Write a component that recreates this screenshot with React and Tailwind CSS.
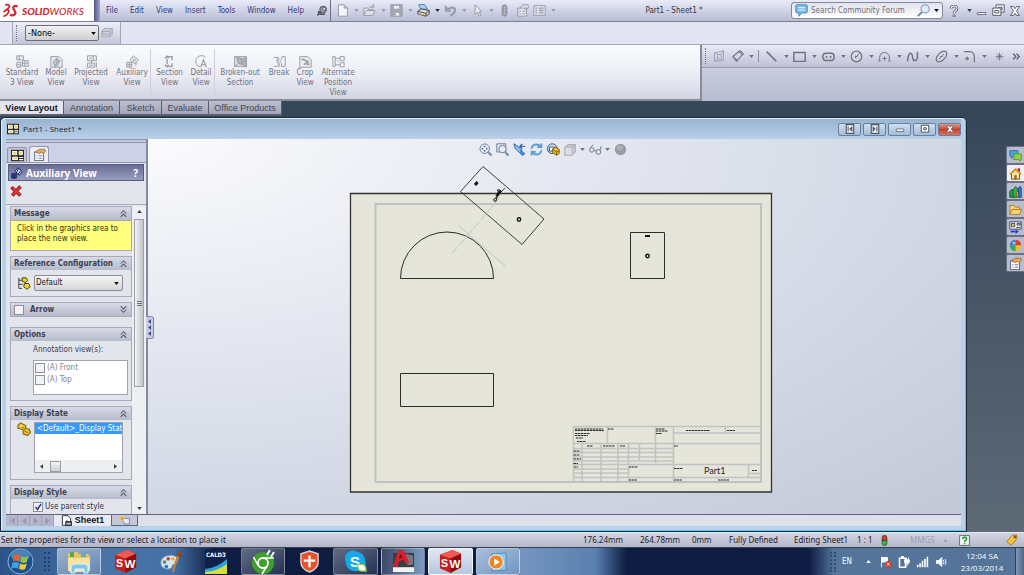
import { useState } from 'react';
import clsx from 'clsx';

const Caret = ({ className = 'text-[#6b7080]' }) => (
    <svg viewBox="0 0 6 4" width="5" height="3" className={className} aria-hidden="true">
        <path d="M0 0h6L3 4z" fill="currentColor" />
    </svg>
);

const Icon = ({ size = 13, className, children }) => (
    <svg
        viewBox="0 0 16 16"
        width={size}
        height={size}
        fill="none"
        stroke="currentColor"
        strokeWidth="1.2"
        className={clsx('shrink-0', className)}
        aria-hidden="true"
    >
        {children}
    </svg>
);

/* ---------- Icon drawings ---------- */

const sheetIcon = (
    <>
        <rect x="0" y="1" width="16" height="14" fill="#2b2b22" stroke="none" />
        <rect x="2" y="3" width="5" height="4" fill="#f5d743" stroke="#fff" />
        <path d="M10 3h4v4h-4z" fill="#f5d743" stroke="#fff" />
        <path d="M2 10h6v3H2z" fill="#f5d743" stroke="#fff" />
        <path d="M10 10.500h5M10 13h5" stroke="#fff" strokeWidth="1.4" />
    </>
);

const handPageIcon = (
    <>
        <rect x="2" y="5" width="11" height="10.5" fill="#fff" stroke="#5c6680" />
        <path d="M4 9.5h1.5M7 9.5h4.5M4 12.5h1.5M7 12.5h4.5" stroke="#5c7bb0" />
        <path d="M3 4.5l5-3h6.5l1 3-3 2.5-2-1.5-3 1.5z" fill="#e0a766" stroke="#8a5a28" strokeWidth="0.8" />
    </>
);

const cubeIcon = (
    <>
        <path d="M1 5l4-3h9v9l-4 4H1z" fill="#c9cbd3" stroke="#a5a7b1" />
        <path d="M1 5h9v10H1z" fill="#dcdee4" stroke="#b0b2bb" />
        <path d="M10 5l4-3" stroke="#a5a7b1" />
    </>
);

const partIcon = (
    <>
        <path d="M1 4l3-3 6 3v3l4 1.5 1.500 3.500-3.500 3.500-5-2V9L1 7z" fill="#f0c52c" stroke="#7d5d0a" />
        <path d="M4 5l5 2.5v3l4 2" stroke="#a47c10" />
        <circle cx="5" cy="4.5" r="1.2" fill="#fff2a0" stroke="none" />
    </>
);

const quickAccess = [
    { name: 'New', art: <path d="M3 1h7l4 4v10H3zM10 1v4h4" fill="#f6f6fa" /> },
    {
        name: 'Open',
        art: (
            <>
                <path d="M1 14V5h5l1 2h5v2M1 14l3-6h11l-3 6z" fill="#dfe1e8" />
                <path d="M8 5c1-3 3-3 5-2M13 0v4h-3" />
            </>
        ),
    },
    {
        name: 'Save',
        art: (
            <>
                <path d="M1 1h14v14H1z" fill="#a5a8b2" />
                <path d="M4 1.5h8v5H4zM4 10h8v5H4z" fill="#eceef3" />
                <path d="M6 11v3" strokeWidth="2" />
            </>
        ),
    },
    {
        name: 'Print',
        active: true,
        art: (
            <>
                <path d="M2 1l7-0.5 4 6H5z" fill="#a9d3f5" stroke="#4d7eaf" />
                <path d="M1 9l4-3 10 2v4l-4 3L1 12z" fill="#e2e2dc" stroke="#45454a" />
                <path d="M1 9l10 2.5L15 8M11 11.5V15" stroke="#45454a" />
                <path d="M3 12l6 1.5" stroke="#d2b43b" strokeWidth="1.5" />
            </>
        ),
    },
    {
        name: 'Undo',
        art: (
            <>
                <path d="M5 7C8 3 14 4 13.5 8.5c-.3 3-3 4.500-6 6" strokeWidth="2.8" />
                <path d="M1 1v8.500h8.500z" fill="currentColor" stroke="none" />
            </>
        ),
    },
    { name: 'Select', art: <path d="M5 1v12l3-3 2 5 2-1-2-4.5h3.5z" fill="#eceef4" /> },
];

const ribbonGroups = [
    [
        {
            label: 'Standard\n3 View',
            width: 'w-11',
            art: <path d="M1 1h8v5H1zM1 9h5v6H1zM8 7h7v7H8zM4 1v5M1 12h5M11 7v7M8 10h7" fill="#eceef2" />,
        },
        {
            label: 'Model\nView',
            width: 'w-6',
            art: (
                <>
                    <path d="M1 2h10l4 4v9H1z" fill="#e8e9ee" />
                    <path d="M4 9l4-5 4 3-3 6-3 1zM8 4l1 5-3 5M9 9l3-2" fill="#c6c8cf" />
                </>
            ),
        },
        {
            label: 'Projected\nView',
            width: 'w-[46px]',
            art: <path d="M3 1h11v6H3zM3 10h9v5H3zM10 1v6M5 4h3M5 12.5h5M8 7v3M14 9v6" fill="#eceef2" />,
        },
        {
            label: 'Auxiliary\nView',
            width: 'w-9',
            art: <path d="M1 9h6v6H1zM9 1l6 5-4 5-6-5zM8 4l4 4M4 9v6M1 12h6M12 5l-4 4M11 13l3-3" fill="#eceef2" />,
        },
    ],
    [
        {
            label: 'Section\nView',
            width: 'w-[37px]',
            art: <path d="M4 2h8M4 14h8M11 2v4M11 10v4M5 5v6M2.5 4L5 1.5 7 4M2.5 12L5 14.5 7 12" strokeWidth="1.8" />,
        },
        {
            label: 'Detail\nView',
            width: 'w-[26px]',
            art: (
                <>
                    <path d="M13 3A7 7 0 1 0 6 14.5" />
                    <path d="M7 15l3.5-9L14 15M8.5 12h4" strokeWidth="1.5" />
                </>
            ),
        },
    ],
    [
        {
            label: 'Broken-out\nSection',
            width: 'w-[50px]',
            art: (
                <>
                    <path d="M0.500 2h15v12h-15z" fill="#dddfe4" />
                    <path d="M4 3v5l3 3 4 1 4 3V3l-4 2-3-1z" fill="#b4b6bd" />
                    <path d="M1 14l5-4M11 6l4 4M2 3l4 3M9 5l1 6" />
                </>
            ),
        },
        { label: 'Break', width: 'w-7', art: <path d="M1 3h4c2 3-2 4 0 6s2 3 0 5H1M6 2c3 4-1 4 1 7s1 3 0 6M11 2h4v12h-5c2-3 0-4-1-6s3-3 2-6z" /> },
        {
            label: 'Crop\nView',
            width: 'w-6',
            art: (
                <>
                    <path d="M1 2h10l4 4v9H1z" fill="#eceef2" />
                    <path d="M3 6c3-2 6 1 9 6M12 7l-6 5M9 12l4-1" strokeWidth="2" />
                </>
            ),
        },
        {
            label: 'Alternate\nPosition\nView',
            width: 'w-[42px]',
            art: <path d="M1 2h3v12H1zM10 2h5v5h-5zM10 9.500h5v5h-5zM4 4h6M4 12h6M6 7l2 1" />,
        },
    ],
];

const sketchTools = [
    { name: 'Line', art: <path d="M2 2l12 12" strokeWidth="1.8" /> },
    { name: 'Rectangle', art: <path d="M1 3h14v11H1z" strokeWidth="1.8" /> },
    {
        name: 'Slot',
        art: (
            <>
                <rect x="1" y="4" width="14" height="9" rx="4" strokeWidth="1.8" />
                <path d="M4.5 8.5h2M9.5 8.5h2" strokeWidth="2.4" />
            </>
        ),
    },
    {
        name: 'Circle',
        art: (
            <>
                <circle cx="8" cy="8" r="6.5" strokeWidth="1.5" />
                <path d="M7 9l5-5M6 8h3M7 7v3" />
            </>
        ),
    },
    { name: 'Arc', art: <path d="M2 13V9a6 6 0 0 1 12 0v4M0.500 13.500h3M12.500 13.500h3M8 8v5M5.5 10.5h5" /> },
    { name: 'Spline', art: <path d="M2 14C2 6 5 2 7 5s0 8 4 8 3-6 3-11" strokeWidth="1.8" /> },
    {
        name: 'Ellipse',
        art: (
            <>
                <ellipse cx="8" cy="8" rx="8" ry="4.5" transform="rotate(-45 8 8)" strokeWidth="1.5" />
                <path d="M5 11l6-6M6.5 8h3" />
            </>
        ),
    },
    { name: 'Fillet', art: <path d="M1 2h7c4 0 6 3 6 6v7M5 8v5M2.5 10.5h5" strokeWidth="1.5" /> },
];

const heads = {
    zoomFit: (
        <>
            <circle cx="7" cy="7" r="5.8" fill="#e6eefb" stroke="#6d7b95" />
            <path d="M7 3l1.500 2h-3zM7 11l1.500-2h-3zM3 7l2-1.500v3zM11 7L9 5.500v3z" fill="#3c4f74" stroke="none" />
            <path d="M11.500 11.500l4 4" stroke="#6c8dbc" strokeWidth="2.6" />
        </>
    ),
    zoomArea: (
        <>
            <path d="M1 1h11v10H1z" stroke="#6d7b95" />
            <circle cx="8" cy="7.500" r="4.5" fill="#e6eefb" stroke="#6d7b95" />
            <path d="M11.500 11.500l4 4" stroke="#6c8dbc" strokeWidth="2.6" />
        </>
    ),
    previous: (
        <>
            <path d="M1 1l5 3 5 5-3 3-5-5z" fill="#8cbcf0" stroke="#2e68b5" />
            <path d="M9 9l5.500 4-2.500 2.500-4-3.500" fill="#4c91de" stroke="#2e68b5" />
            <path d="M15 4H9M11.500 1L8.5 4l3 3" stroke="#2457a5" strokeWidth="1.5" />
        </>
    ),
    rotate: (
        <path d="M2 7c0-5 7-7 11-3M14 0.5V5H9M14 9c0 5-7 7-11 3M2 15.5V11h5" stroke="#5b9be0" strokeWidth="2.2" />
    ),
    section: (
        <>
            <circle cx="6.5" cy="7" r="6" fill="#cde0f5" stroke="#3e5682" />
            <path d="M3 5h6v5H3z" fill="#fff" stroke="#3e5682" />
            <path d="M7 7l3-2 5 3v5l-3 2-5-3z" fill="#f2c325" stroke="#7d5d0a" />
            <path d="M7 8l5 3 3-2M12 11v4" stroke="#7d5d0a" />
        </>
    ),
    glasses: (
        <>
            <circle cx="3.500" cy="8.500" r="2.800" fill="#dbe6f5" stroke="#71798a" />
            <circle cx="11.5" cy="11" r="3" fill="#dbe6f5" stroke="#71798a" />
            <path d="M6.5 9l2.500 1M2 6l3-4M13.500 9L15 4" stroke="#71798a" />
        </>
    ),
    sphere: (
        <>
            <circle cx="8" cy="8" r="7" fill="#9a9ca3" stroke="none" />
            <ellipse cx="7" cy="6" rx="4" ry="3" fill="#adafb6" stroke="none" />
        </>
    ),
};

const hud = [
    ['Zoom to Fit', heads.zoomFit],
    ['Zoom to Area', heads.zoomArea],
    ['Previous View', heads.previous],
    ['Rotate View', heads.rotate],
    ['3D Drawing View', heads.section],
    ['Display Style', cubeIcon, true],
    ['Hide/Show Items', heads.glasses, true],
    ['Edit Appearance', heads.sphere],
];

const taskPane = [
    {
        name: 'Forum',
        art: (
            <>
                <path d="M1 2h10v7H5l-2 3V9H1z" fill="#4aa1e0" stroke="#2b78b5" />
                <path d="M6 6h9v7h-1v2l-2-2H6z" fill="#8fd04a" stroke="#5c9c22" />
            </>
        ),
    },
    {
        name: 'Resources',
        active: true,
        art: (
            <>
                <path d="M11 2h2v5h-2z" fill="#c33" stroke="#811" strokeWidth="0.8" />
                <path d="M3 8v7h10V8L8 3.5z" fill="#f7e7a2" stroke="#7b5411" />
                <path d="M1 9l7-6.5L15 9" stroke="#d49322" strokeWidth="2" />
                <path d="M6.5 10h3v5h-3z" fill="#9a6425" stroke="none" />
            </>
        ),
    },
    {
        name: 'Design Library',
        art: (
            <>
                <path d="M1 8l3-3 2 2v8H1z" fill="#2ba14b" stroke="#0d5a24" />
                <path d="M5 7l3-5 3 3v10H5z" fill="#34b35a" stroke="#0d5a24" />
                <path d="M9 8h2.500v7H9z" fill="#edc52a" stroke="#7d5d0a" />
                <path d="M12 3l2-1 1 2v11h-3z" fill="#3e83d6" stroke="#17427f" />
            </>
        ),
    },
    {
        name: 'File Explorer',
        art: <path d="M1 14V3h5l1.5 2H13v3M1 14l3-6h11.5L13 14z" fill="#f6d678" stroke="#b67b1c" />,
    },
    {
        name: 'View Palette',
        art: (
            <>
                <path d="M1 1h14v9H1z" fill="#f4f1d2" stroke="#3d4f7c" />
                <path d="M3 3h4v4H3zM10 3h4v2h-4zM9 8h5" fill="#eccd3c" stroke="#3d4f7c" />
                <path d="M2 13h6" stroke="#1c3cc9" strokeWidth="2.2" />
                <path d="M8 10v6l4-3z" fill="#1c3cc9" stroke="none" />
            </>
        ),
    },
    {
        name: 'Appearances',
        art: (
            <g stroke="none">
                <path d="M8 8V1a7 7 0 0 1 7 7z" fill="#e03c31" />
                <path d="M8 8h7a7 7 0 0 1-7 7z" fill="#ecc12c" />
                <path d="M8 8v7a7 7 0 0 1-7-7z" fill="#37a84c" />
                <path d="M8 8H1a7 7 0 0 1 7-7z" fill="#3278d4" />
                <circle cx="6" cy="5" r="2" fill="#ffffff" opacity="0.5" />
            </g>
        ),
    },
    { name: 'Custom Properties', art: handPageIcon },
];

const SwCube = () => (
    <svg viewBox="0 0 26 26" width="25" height="25" aria-hidden="true">
        <path d="M2 6l13-5 9 4v14l-11 6-11-5z" fill="#c81d1d" />
        <path d="M2 6l13-5 9 4-11 5z" fill="#ef5a50" />
        <path d="M13 10l11-5v14l-11 6z" fill="#8e0f12" />
        <text x="3" y="19" fontSize="11" fontWeight="700" fill="#fff" fontFamily="Liberation Sans, sans-serif">S</text>
        <text x="12" y="20" fontSize="12" fontWeight="700" fill="#fff" fontFamily="Liberation Sans, sans-serif">W</text>
    </svg>
);

const taskItems = [
    {
        name: 'Windows Explorer',
        state: 'open',
        art: (
            <svg viewBox="0 0 26 26" width="26" height="26" aria-hidden="true">
                <path d="M2 5l4-2h5l2 2h9l2 2v15H2z" fill="#e7c664" />
                <path d="M4 3h4v5H4z" fill="#56a94d" />
                <path d="M15 3h5v5h-5z" fill="#6aa5da" />
                <path d="M2 9h22v12l-2 2H4l-2-2z" fill="#f6e3a0" />
                <path d="M5 24v-7l3-2h11l3 2v7h-4v-4H9v4z" fill="#7ec5ee" stroke="#dff2ff" />
            </svg>
        ),
    },
    { name: 'SolidWorks', art: <SwCube /> },
    {
        name: 'Paint',
        art: (
            <svg viewBox="0 0 26 26" width="24" height="24" aria-hidden="true">
                <path d="M2 14c0-6 7-9 13-8 5 1 7 5 4 8-2 2-5 1-5 4 0 4-12 4-12-4z" fill="#d9e7f4" stroke="#7f9dbb" />
                <circle cx="6" cy="13" r="2" fill="#4a9b3f" />
                <circle cx="10" cy="9.5" r="2" fill="#d94134" />
                <circle cx="15" cy="9.5" r="2" fill="#efb32a" />
                <circle cx="8" cy="18" r="2" fill="#3672c9" />
                <path d="M21 2l3 1-5 11-3 10-2-1 3-10z" fill="#cc8236" />
                <path d="M20 1l5 2-2 5-4-2z" fill="#8a4c1c" />
            </svg>
        ),
    },
    {
        name: 'CALD3',
        art: (
            <svg viewBox="0 0 22 24" width="22" height="24" aria-hidden="true">
                <path d="M0 0h22v24H0z" fill="#14204c" />
                <path d="M0 19Q12 18 22 9v11L0 24z" fill="#2ba6dc" />
                <path d="M0 22Q13 21 22 14v10H0z" fill="#d7de3b" />
                <text x="1" y="7" fontSize="6" fontWeight="700" fill="#fff" fontFamily="DejaVu Sans Condensed, sans-serif">CALD3</text>
            </svg>
        ),
    },
    {
        name: 'Chrome',
        state: 'dim',
        art: (
            <svg viewBox="0 0 26 26" width="26" height="26" fill="none" aria-hidden="true">
                <circle cx="13" cy="14" r="11" fill="#3f9f2d" />
                <path d="M13 9h11M8.5 17L3.5 8M17 17l-5 8" stroke="#fff" strokeWidth="1.5" />
                <circle cx="13" cy="14" r="5" fill="#3f9f2d" stroke="#fff" strokeWidth="1.8" />
                <path d="M17 6l3-5M21 8l3-5" stroke="#fff" strokeWidth="2" />
            </svg>
        ),
    },
    {
        name: 'Security',
        art: (
            <svg viewBox="0 0 22 24" width="21" height="23" aria-hidden="true">
                <path d="M11 1l9 3v9c0 5-4 8-9 10-5-2-9-5-9-10V4z" fill="#e8532b" stroke="#cfd3da" strokeWidth="1.5" />
                <path d="M11 6v12M5 11h12" stroke="#fff" strokeWidth="2.4" />
            </svg>
        ),
    },
    {
        name: 'Skype',
        state: 'dim',
        art: (
            <svg viewBox="0 0 26 26" width="25" height="25" aria-hidden="true">
                <path d="M8 2c3-1 5 0 6 1 6 0 9 5 9 9 2 5-1 11-7 11C7 24 3 19 3 14 1 9 2 4 8 2z" fill="#14a9ea" />
                <text x="7" y="19" fontSize="16" fontWeight="700" fill="#fff" fontFamily="Liberation Sans, sans-serif">S</text>
                <path d="M15 16h5q4 0 4 7h-4q-5 0-5-7z" fill="#fff" stroke="#8cc63f" strokeWidth="1.5" />
            </svg>
        ),
    },
    {
        name: 'AutoCAD',
        state: 'half',
        art: (
            <svg viewBox="0 0 24 26" width="23" height="25" aria-hidden="true">
                <path d="M1 4h22v15H1z" fill="#3e3e42" />
                <path d="M14 5l8 2v9l-6 1z" fill="#77787d" />
                <path d="M1 19h22v5H1z" fill="#f2f2f2" />
                <path d="M1 18L7 1h5l6 13-4 1-2-4-5 2-1 6z" fill="#d2232d" />
                <path d="M9 5l-2 5 4-1z" fill="#7c1017" />
            </svg>
        ),
    },
    { name: 'SolidWorks 2012', state: 'active', art: <SwCube /> },
    {
        name: 'Media Player',
        state: 'blue',
        art: (
            <svg viewBox="0 0 22 22" width="21" height="21" aria-hidden="true">
                <path d="M5 3l15-1v18l-15 1z" fill="#8ec7e8" stroke="#4b8fc2" />
                <circle cx="9.5" cy="11.5" r="7.5" fill="#f08422" stroke="#fff" />
                <path d="M7.5 7.5v8l6-4z" fill="#fff" />
            </svg>
        ),
    },
];

const taskState = {
    open: 'border border-white/40 bg-linear-to-br from-white/50 to-white/15',
    dim: 'border border-white/30 bg-linear-to-br from-white/35 to-white/10',
    half: 'border border-white/30 bg-linear-to-r from-white/20 to-[#7b9cc4]',
    active: 'border border-white/80 bg-linear-to-b from-[#dfe8f3] to-[#b4c8df]',
    blue: 'border border-white/40 bg-linear-to-br from-[#a9bfdb] to-[#7395c0]',
};

/* ---------- Top area ---------- */

const TitleBar = () => (
    <header className="flex h-[22px] items-stretch border-b border-[#7c7f8c] bg-linear-to-b from-[#e9ebfa] to-[#b9bdd3]">
        <div className="flex w-[94px] items-center gap-[3px] bg-white pl-[2px]">
            <svg viewBox="0 0 17 16" width="17" height="16" fill="none" stroke="#d8232a" strokeWidth="1.7" aria-hidden="true">
                <path d="M3 2c4-1 6 1 3 3.5L1.5 9M4 7c5-1 3 4-2.5 6.5" />
                <path d="M15.5 3.5c-3-1.5-5 .5-4 2.5s3 3 1.5 5-4 1.5-5 .5" strokeWidth="2.2" />
            </svg>
            <span className="font-['Lato','Open_Sans',sans-serif] text-[10px] leading-none text-[#d8232a] italic">
                <span className="font-black">SOLID</span>
                <span className="font-medium">WORKS</span>
            </span>
        </div>
        <div className="w-[6px] bg-linear-to-r from-[#50558a] to-[#a2a6c6]" />
        <nav className="flex w-[213px] items-center gap-3 pl-[6px] text-[#34387a]" aria-label="Main menu">
            {['File', 'Edit', 'View', 'Insert', 'Tools', 'Window', 'Help'].map((item) => (
                <button key={item}>{item}</button>
            ))}
        </nav>
        <button aria-label="Pin menu" className="flex w-[18px] items-center justify-center border-r border-[#6d7085]">
            <Icon size={12} className="text-[#4b4e5c]">
                <circle cx="9.5" cy="6" r="4.5" fill="#9a9ca8" />
                <circle cx="11" cy="5" r="2" fill="#e8e9ee" />
                <path d="M6 9l-4 5M3 8c1 4 5 5 9 4" strokeWidth="2" />
            </Icon>
        </button>
        <div className="flex items-center pl-[3px] text-[#989ba8]">
            {quickAccess.map((tool) => (
                <button key={tool.name} aria-label={tool.name} className="flex w-[27px] items-center gap-[5px] pl-[2px]">
                    <Icon>{tool.art}</Icon>
                    <Caret className={tool.active ? 'text-[#22253c]' : 'text-[#9a9dab]'} />
                </button>
            ))}
            <button aria-label="Rebuild" className="flex w-[17px] justify-center">
                <Icon>
                    <rect x="5" y="1" width="6" height="14" rx="3" fill="#8f929e" />
                    <path d="M7 4.5h2M7 8h2M7 11.5h2" stroke="#d3d5de" strokeWidth="2" />
                </Icon>
            </button>
            <button aria-label="File properties" className="flex w-[18px] justify-center">
                <Icon>
                    <path d="M2 5h11v10H2zM5 5l3-4h7v4l-3 2-2-2M4 9h2M8 9h3M4 12h2M8 12h3" fill="#e0e2ea" />
                </Icon>
            </button>
            <button aria-label="Options" className="flex w-[26px] items-center gap-[5px] pl-[2px]">
                <Icon>
                    <path d="M1 2h14v12H1z" fill="#e3e5ec" />
                    <path d="M3 5h2M7 5h6M3 8h2M7 8h6M3 11h2M7 11h6" strokeWidth="1.6" />
                </Icon>
                <Caret className="text-[#9a9dab]" />
            </button>
        </div>
        <h1 className="flex flex-1 items-center justify-center whitespace-pre text-[#33353d]">Part1 - Sheet1 *</h1>
        <form className="my-[2px] flex w-[152px] items-center gap-[3px] rounded-[3px] border border-[#85899a] bg-linear-to-b from-[#e1e3ec] to-white px-[3px]">
            <Icon>
                <path d="M2 1h12l1 1v8l-1 1H8l-3 4v-4H2l-1-1V2z" fill="#7fc0ec" stroke="#3f87bd" />
                <path d="M4 4.5h8M4 7.5h8" stroke="#e9f6ff" />
            </Icon>
            <input
                aria-label="Search Community Forum"
                placeholder="Search Community Forum"
                className="min-w-0 flex-1 bg-transparent outline-none placeholder:text-[#6a6d78]"
            />
            <button type="button" aria-label="Search" className="flex items-center gap-[4px]">
                <Icon>
                    <circle cx="10" cy="6" r="5" fill="#dcebf7" stroke="#7591b0" />
                    <path d="M6 10l-5 5" stroke="#5e7da0" strokeWidth="2" />
                </Icon>
                <Caret className="text-black" />
            </button>
        </form>
        <div className="flex w-[81px] items-center justify-between pr-[3px] pl-[5px] text-[#565967]">
            <button aria-label="Help" className="flex items-center gap-[7px]">
                <Icon size={12}>
                    <path d="M4 5c0-5 8-5 8 0 0 3-4 3-4 6M8 13v2.5" stroke="#565967" strokeWidth="3.6" />
                    <path d="M4 5c0-5 8-5 8 0 0 3-4 3-4 6M8 13.5v1.5" stroke="#fff" strokeWidth="1.4" />
                </Icon>
                <Caret className="text-[#3b3e52]" />
            </button>
            <button aria-label="Minimize">
                <Icon size={11}><path d="M2 11h12v3H2z" fill="#fff" /></Icon>
            </button>
            <button aria-label="Restore">
                <Icon size={13}>
                    <path d="M5 1h10v9H5zM7.5 4h5v3h-5z" fill="#fff" />
                    <path d="M1 5h10v9H1zM3.5 8h5v3h-5z" fill="#fff" />
                </Icon>
            </button>
            <button aria-label="Close">
                <Icon size={12}>
                    <path d="M2 2h4l2 3 2-3h4l-4 6 4 6h-4l-2-3-2 3H2l4-6z" fill="#fff" />
                </Icon>
            </button>
        </div>
    </header>
);

const LayerBar = () => (
    <div className="flex h-[23px] items-stretch border-b border-[#a4a6b0] bg-[#e3e5f4]">
        <div className="w-[13px] border-r border-[#a4a6b0]" />
        <div className="flex w-[108px] items-center border-r border-[#a4a6b0] bg-linear-to-b from-[#eceefa] to-[#c3c6d9] pl-[3px]">
            <div className="mr-2 h-4 border-l border-dotted border-[#70738a]" />
            <div className="relative flex w-[74px] items-center">
                <select
                    aria-label="Layer"
                    className="h-[16px] w-full appearance-none rounded-[2px] border border-[#6b6e78] bg-linear-to-b from-[#f2f2f2] to-[#cfcfd2] pl-[2px] text-[9px] text-black"
                >
                    <option>-None-</option>
                </select>
                <span className="pointer-events-none absolute right-[3px]">
                    <Caret className="text-black" />
                </span>
            </div>
            <button aria-label="Layer properties" className="ml-[2px]">
                <Icon size={12} className="text-[#a5a8b5]">
                    <path d="M1 5l4-3h10l-3 4H1zM1 9l3-3M1 13V6h11v7zM12 13l3-3V2M1 9.5h11l3-3" fill="#c9cbd6" />
                </Icon>
            </button>
        </div>
    </div>
);

const Ribbon = () => (
    <div className="flex h-[56px]">
        <div className="flex min-w-0 flex-1 items-stretch border-r-2 border-b-2 border-[#8a8c96] bg-linear-to-b from-[#fbfcfe] via-[#eeeff6] to-[#d2d4e3]">
            {ribbonGroups.map((group, index) => (
                <div key={index} className={clsx('flex items-start', index > 0 && 'my-1 border-l border-[#cfd0dc]')}>
                    {group.map((tool) => (
                        <button
                            key={tool.label}
                            className={clsx(
                                'flex flex-col items-center text-[#6f717b]',
                                index > 0 ? 'pt-[6px]' : 'pt-[10px]',
                                tool.width
                            )}
                        >
                            <Icon className="text-[#9b9da5]">{tool.art}</Icon>
                            <span className="text-center leading-[10px] whitespace-pre">{tool.label}</span>
                        </button>
                    ))}
                </div>
            ))}
        </div>
        <div className="flex w-[322px] flex-col bg-linear-to-b from-[#d5d7e6] to-[#b8bbd0]">
            <div className="flex h-[23px] items-center border-b border-[#9a9da8] bg-linear-to-b from-[#e8eaf6] to-[#bfc2d6] pl-[3px] text-[#70737e]">
                <div className="h-4 w-[8px] border-l border-dotted border-[#70738a]" />
                <button aria-label="Sketch" className="flex w-[19px] text-[#a0a3ae]">
                    <Icon size={12}>
                        <path d="M2 4l12-3v13l-12 1zM6 6h5v6H6zM2 4l4 2M14 1l-3 5M2 15l4-3M14 14l-3-2" />
                    </Icon>
                </button>
                <button aria-label="Smart Dimension" className="flex w-[26px] items-center gap-[5px]">
                    <Icon size={12}>
                        <path d="M1 9l8-7 5 4-7 8zM1 9l5 6 2-2M9 2l2-1 4 4-1 2" strokeWidth="1.4" />
                    </Icon>
                    <Caret />
                </button>
                <div className="h-3 border-l border-[#8a8d9a]" />
                <div className="ml-[6px] flex flex-1">
                    {sketchTools.map((tool) => (
                        <button key={tool.name} aria-label={tool.name} className="flex flex-1 items-center gap-[6px]">
                            <Icon>{tool.art}</Icon>
                            <Caret />
                        </button>
                    ))}
                </div>
                <button aria-label="Point" className="flex w-[17px] items-center justify-center">
                    <Icon size={9}><path d="M8 1v14M1 8h14M3 3l10 10M13 3L3 13" strokeWidth="1.5" /></Icon>
                </button>
                <button aria-label="More tools" className="flex w-[16px] items-center justify-center text-[#4b4e5a]">
                    <Icon size={9}><path d="M2 3l5 5-5 5M8 3l5 5-5 5" strokeWidth="2" /></Icon>
                </button>
            </div>
        </div>
    </div>
);

const ribbonTabs = [
    ['View Layout', 'w-[64px]'],
    ['Annotation', 'w-[56px]'],
    ['Sketch', 'w-[42px]'],
    ['Evaluate', 'w-[47px]'],
    ['Office Products', 'w-[73px]'],
];

const RibbonTabs = () => {
    const [active, setActive] = useState('View Layout');

    return (
        <div className="flex h-[15px] font-['Liberation_Sans',Arial,sans-serif] text-[9px]" role="tablist">
            {ribbonTabs.map(([label, width]) => (
                <button
                    key={label}
                    role="tab"
                    aria-selected={active === label}
                    onClick={() => setActive(label)}
                    className={clsx(
                        'border-r border-b-2 border-[#5b5e6c] whitespace-nowrap',
                        width,
                        active === label
                            ? 'bg-[#e4e5ee] font-bold text-[#16171c]'
                            : 'bg-linear-to-b from-[#bcbfd0] to-[#a3a6ba] text-[#45474f]'
                    )}
                >
                    {label}
                </button>
            ))}
        </div>
    );
};

/* ---------- Property manager ---------- */

const CheckBox = ({ label, disabled, defaultChecked, className, labelHidden }) => (
    <label className={clsx('flex items-center gap-[2px]', className)}>
        <span className="relative flex">
            <input
                type="checkbox"
                aria-label={labelHidden ? label : undefined}
                disabled={disabled}
                defaultChecked={defaultChecked}
                className="peer size-[10px] appearance-none border border-[#8d9096] bg-[#f2f3f5]"
            />
            <svg
                viewBox="0 0 10 10"
                className="pointer-events-none absolute inset-0 hidden size-[10px] peer-checked:block"
                aria-hidden="true"
            >
                <path d="M2.5 5l2 2.5L8 2" fill="none" stroke="#273a8a" strokeWidth="1.5" />
            </svg>
        </span>
        {!labelHidden && label}
    </label>
);

const Group = ({ title, collapsed, lead, className, children }) => (
    <section className="shrink-0 border border-[#a7aabb]">
        <h3 className="flex h-[13px] items-center justify-between bg-linear-to-b from-[#d8dbe6] to-[#b6bbcb] px-[3px] font-bold text-[#3c4152]">
            <span className="flex items-center gap-[6px]">
                {lead}
                {title}
            </span>
            <button aria-label={`${collapsed ? 'Expand' : 'Collapse'} ${title}`}>
                <Icon size={9} className={clsx('text-[#555a6b]', collapsed && 'rotate-180')}>
                    <path d="M3 8l5-5 5 5M3 14l5-5 5 5" strokeWidth="1.8" />
                </Icon>
            </button>
        </h3>
        {children && <div className={className}>{children}</div>}
    </section>
);

const PropertyManager = () => (
    <aside className="relative flex w-[142px] flex-col border-r-2 border-[#858aa4] bg-[#e3e5ed]">
        <div className="h-[4px] border-y border-[#9195ad] bg-[#c5c9de]" />
        <div className="flex items-end gap-[2px] border-b border-[#9195ad] bg-[#cdd1e5] pt-[3px] pl-[1px]">
            <button aria-label="Feature tree" className="flex h-[15px] w-[20px] items-center justify-center rounded-t-[3px] border border-b-0 border-[#9195ad] bg-[#c3c6d8]">
                <Icon>{sheetIcon}</Icon>
            </button>
            <button aria-label="Property manager" className="flex h-[16px] w-[20px] items-center justify-center rounded-t-[3px] border border-b-0 border-[#9195ad] bg-[#eceef4]">
                <Icon>{handPageIcon}</Icon>
            </button>
        </div>
        <h2 className="mx-[2px] mt-[1px] flex h-[17px] items-center gap-[3px] border border-[#585d84] bg-linear-to-b from-[#686c94] to-[#9a9ebd] px-[2px] font-['Noto_Sans',sans-serif] text-[10px] font-bold text-white">
            <Icon size={12}>
                <path d="M1 9h6v6H1z" fill="#3f59b5" stroke="#101c58" />
                <path d="M9 1l6 5-4 5-6-5z" fill="#c9d4f1" stroke="#101c58" />
                <path d="M10 2l-3 6M13 5l-4 5M4 9v6M1 12h6" stroke="#101c58" />
            </Icon>
            <span className="flex-1">Auxiliary View</span>
            <button aria-label="Help for this page" className="pr-[3px]">?</button>
        </h2>
        <div className="flex h-[24px] border-b border-[#a7aabb] pt-[4px] pl-[4px]">
            <button aria-label="Cancel" className="h-3">
                <Icon size={12}>
                    <path d="M2 3l12 11M14 2L3 14" stroke="#8f0f14" strokeWidth="4.5" />
                    <path d="M3 3.5l10.5 10M13.5 3L3.5 13.5" stroke="#e4383c" strokeWidth="2.6" />
                </Icon>
            </button>
        </div>
        <div className="flex min-h-0 flex-1 pt-px">
            <div className="flex min-w-0 flex-1 flex-col gap-[5px] overflow-hidden pl-[4px]">
                <Group title="Message" className="border-t border-[#a7aabb] bg-[#ffff7d] px-[6px] pt-[3px] pb-[6px] leading-[10px] text-[#303020]">
                    Click in the graphics area to place the new view.
                </Group>
                <Group title="Reference Configuration" className="flex h-[26px] items-center gap-[3px] pr-[8px] pl-[7px]">
                    <Icon>
                        <path d="M1 1v13h4M1 4h4M1 9h5" stroke="#3b3b3b" />
                        <path d="M5 1h5l2 3-3 3-4-2zM8 8h5l2 4-4 3-4-3z" fill="#efd232" stroke="#4d400c" />
                    </Icon>
                    <div className="relative flex flex-1 items-center">
                        <select
                            aria-label="Reference configuration"
                            className="h-[16px] w-full appearance-none rounded-[2px] border border-[#8a8d95] bg-linear-to-b from-[#f5f5f5] to-[#d5d5d8] pl-[1px] text-[#17181c]"
                        >
                            <option>Default</option>
                        </select>
                        <span className="pointer-events-none absolute right-[4px]">
                            <Caret className="text-black" />
                        </span>
                    </div>
                </Group>
                <div className="shrink-0 pb-[5px]">
                    <Group title="Arrow" collapsed lead={<CheckBox label="Arrow" labelHidden />} />
                </div>
                <Group title="Options" className="h-[59px] pt-[3px] pr-[3px] pl-[22px] text-[#3c4152]">
                    <p className="leading-[11px]">Annotation view(s):</p>
                    <div className="mt-[5px] flex h-[35px] flex-col border border-[#a0a3ae] bg-white pt-[1px] pl-[1px] text-[#84868e]">
                        <CheckBox label="(A) Front" disabled className="h-[12px]" />
                        <CheckBox label="(A) Top" disabled className="h-[12px]" />
                    </div>
                </Group>
                <Group title="Display State" className="flex h-[59px] gap-[3px] pt-[2px] pr-[8px] pl-[6px]">
                    <Icon size={14}>{partIcon}</Icon>
                    <div className="flex h-[51px] min-w-0 flex-1 flex-col justify-between border border-[#a0a3ae] bg-white">
                        <button className="w-full overflow-hidden bg-[#3399ff] pl-[2px] text-left leading-[11px] whitespace-nowrap text-white">
                            {'<Default>_Display Stat'}
                        </button>
                        <div className="flex h-[12px] items-center justify-between bg-[#eeeff1] px-[4px]">
                            <div className="flex items-center gap-[6px]">
                                <Caret className="rotate-90 text-[#34363d]" />
                                <div className="size-[11px] border border-[#9b9da4] bg-linear-to-b from-[#f4f4f4] to-[#cfd0d4]" />
                            </div>
                            <Caret className="-rotate-90 text-[#34363d]" />
                        </div>
                    </div>
                </Group>
                <Group title="Display Style" className="pt-[2px] pb-6 pl-[22px] leading-[11px] text-[#2f3340]">
                    <CheckBox label="Use parent style" defaultChecked />
                </Group>
            </div>
            <div className="flex w-[14px] flex-col items-center bg-[#eeeff3] py-[4px]">
                <Caret className="rotate-180 text-[#34363d]" />
                <div className="mt-[6px] flex h-[168px] w-[10px] flex-col items-center justify-center gap-px border border-[#9fa1a9] bg-linear-to-r from-[#f3f3f5] to-[#c3c4ca]">
                    <span className="h-px w-[5px] bg-[#6f717a]" />
                    <span className="h-px w-[5px] bg-[#6f717a]" />
                    <span className="h-px w-[5px] bg-[#6f717a]" />
                </div>
                <Caret className="mt-auto text-[#34363d]" />
            </div>
        </div>
        {/* splitter handle sits over the graphics area */}
        <button
            aria-label="Resize panel"
            className="absolute top-[177px] -right-[8px] z-10 flex h-[23px] w-[8px] flex-col items-center justify-evenly rounded-r-[3px] border border-l-0 border-[#858aa4] bg-[#c8cce3]"
        >
            <Caret className="rotate-90 text-[#3f458c]" />
            <Caret className="rotate-90 text-[#3f458c]" />
            <Caret className="rotate-90 text-[#3f458c]" />
        </button>
    </aside>
);

/* ---------- Drawing sheet ---------- */

const titleBlock =
    'M573.5 426V482M573 426.5H761M607.5 426V443M655.5 426V463M673.5 426V481M573 443.5H761M673 433H761M725.5 426V433' +
    'M573 448.5H673M573 452.5H673M573 457H673M573 461H673M573 464.5H761M573 469H628M573 473H628M573 477.5H761' +
    'M582 443V481M601 443V481M618 443V481M628.5 443V481M639.5 443V461M748.5 464V477M748 473.5H761';

const titleNotes =
    'M575 429H603M575 430.5H604M575 433.5H590M575 435.5H588M576 438H583M577 441.5H586M608 429H614M656 429H665M656 431H668M656 433.5H662' +
    'M686 430.5H710M727 430.5H735M587 446H593M603 446H615M620 446H625M573.5 451H580M573.5 455H580M573.5 459H581M573.5 463.5H578M574 467H578' +
    'M629 467H638M674 446H678M674 468.5H683M629 480H637M674 480H682M718 480H729M752 470.5H757';

const DrawingSheet = () => (
    <svg viewBox="148 139 813 375" className="h-full w-full" fill="none" role="img" aria-label="Part1 sheet">
        <path d="M350.5 193.5h421v298.5h-421z" fill="#e5e5da" stroke="#333" strokeWidth="1.3" />
        <path d="M375.5 204H761V482H375.5z" stroke="#c0c0c4" strokeWidth="2" />
        <path d={titleBlock} stroke="#c2c2c5" strokeWidth="1.6" />
        <path d={titleNotes} stroke="#2e2e2c" strokeWidth="1.2" strokeDasharray="2.5 0.5" />
        <text x="704" y="474" fontSize="9" fill="#26262a" fontFamily="Lato, sans-serif">Part1</text>

        <g stroke="#2c2c2c">
            <path d="M400.5 278.5a46.5 46.5 0 0 1 93 0z" />
            <path d="M400.5 373.5h93v33h-93zM630.5 232.5h34v46h-34z" />
            <path d="M483 166.5L460.5 191.5 522 244.5 544 219z" strokeWidth="0.9" />
        </g>
        <g stroke="#c3c3c4">
            <path d="M452 253.5L486 214" strokeDasharray="9 2" />
            <path d="M486 214l14-17M458 225l48.5 42" />
        </g>
        <g stroke="#161616">
            <circle cx="519" cy="219.5" r="1.7" strokeWidth="1.4" />
            <circle cx="647.5" cy="256" r="1.7" strokeWidth="1.4" />
            <path d="M645 236h5" strokeWidth="2" />
            <path d="M475 185l2.5-3" strokeWidth="3" />
            <path d="M505 188l-8 8" strokeWidth="0.8" />
            <path d="M501 190.5l-4.5 6" strokeWidth="2.6" />
            <path d="M497 190h3M498 190v3M497 197l-1 4c-2 1-3-1-2-2z" />
        </g>
    </svg>
);

const Canvas = () => (
    <main className="relative min-w-0 flex-1 bg-radial-[at_0%_0%] from-[#fbfbfd] via-[#dde1ec] to-[#c3c8d8]">
        <DrawingSheet />
        {/* heads-up view toolbar */}
        <div className="absolute inset-x-0 top-[4px] flex items-center justify-center gap-[4px] pr-[3px]">
            {hud.map(([name, art, menu]) => (
                <button key={name} aria-label={name} className="flex items-center gap-[3px]">
                    <Icon>{art}</Icon>
                    {menu && <Caret />}
                </button>
            ))}
        </div>
    </main>
);

const SheetTabs = () => (
    <div className="flex h-[12px] border-t border-[#62657a] bg-[#dde0ea]">
        <div className="flex w-[48px] text-[#9498b2]">
            {['M4 2v12M13 2L6 8l7 6z', 'M12 2L5 8l7 6z', 'M4 2l7 6-7 6z', 'M12 2v12M3 2l7 6-7 6z'].map((d) => (
                <button key={d} aria-label="Scroll sheets" className="flex flex-1 items-center justify-center border-r border-[#9da0b8] bg-[#b5b8cd]">
                    <Icon size={8}><path d={d} fill="currentColor" /></Icon>
                </button>
            ))}
        </div>
        <button className="flex w-[58px] items-center justify-center gap-[3px] border-r border-[#62657a] bg-[#e9eaf1] font-['Liberation_Sans',Arial,sans-serif] text-[9px] leading-[11px] font-bold text-[#15161b]">
            <Icon size={11}>
                <path d="M2 1h8l4 4v10H2z" fill="#fff" />
                <path d="M7 10h8v5H7zM8 8l3 3" fill="#b9bed5" strokeWidth="1.5" />
            </Icon>
            Sheet1
        </button>
        <button aria-label="Add sheet" className="flex w-[26px] items-center justify-center border-r border-b border-[#62657a] bg-[#c4c7da]">
            <Icon size={11}>
                <path d="M4 5h11v8H8z" fill="#e3f0fb" stroke="#5d7ca3" />
                <circle cx="4.5" cy="5" r="3" fill="#f59a2a" stroke="#f7d060" />
            </Icon>
        </button>
    </div>
);

const captionButtons = [
    ['Dock left', <path key="a" d="M2 1h12v14H2zM5 4v8M11 5L8 8l3 3z" fill="#fff" strokeWidth="1.8" />],
    ['Dock right', <path key="b" d="M2 1h12v14H2zM11 4v8M5 5l3 3-3 3z" fill="#fff" strokeWidth="1.8" />],
    ['Minimize document', <path key="c" d="M2 8h12v4H2z" fill="#fff" />],
    ['Maximize document', <path key="d" d="M2 2h12v11H2zM6 6h4v3H6z" fill="#fff" strokeWidth="1.6" />],
    ['Close document', <path key="e" d="M2 3h4l2 2 2-2h4l-4 5 4 5h-4l-2-2-2 2H2l4-5z" fill="#fff" stroke="#5e5560" />],
];

const DocumentWindow = () => (
    <div className="mt-[1px] flex min-w-0 flex-1 flex-col rounded-t-[5px] border border-[#1c2733] bg-[#b9d0e9] px-[5px] pb-[5px] shadow-[inset_-1px_-1px_0_#4fd0ee,inset_1px_1px_0_#e3eef8]">
        <div className="mt-px flex h-[20px] items-center gap-[2px] bg-linear-to-b from-[#98b4d1] to-[#b9d0e9]">
            <h2 className="flex flex-1 items-center gap-[4px] pl-[1px] font-['Open_Sans',sans-serif] text-[8px] text-[#20242c]">
                <Icon size={12}>{sheetIcon}</Icon>
                Part1 - Sheet1 *
            </h2>
            {captionButtons.map(([name, art], index) => (
                <button
                    key={name}
                    aria-label={name}
                    className={clsx(
                        'flex h-[13px] w-[23px] items-center justify-center rounded-[2px] border border-[#6a7f99] text-[#4c5665]',
                        index === 4
                            ? 'bg-linear-to-b from-[#e09a8c] via-[#c3412c] to-[#d8735f]'
                            : 'bg-linear-to-b from-[#cfdfef] to-[#a3bcd7]'
                    )}
                >
                    <Icon size={10}>{art}</Icon>
                </button>
            ))}
        </div>
        <div className="flex min-h-0 flex-1">
            <PropertyManager />
            <Canvas />
        </div>
        <SheetTabs />
    </div>
);

const TaskPane = () => (
    <div className="mt-[30px] flex w-[57px] flex-col items-end">
        {taskPane.map((tab) => (
            <button
                key={tab.name}
                aria-label={tab.name}
                className={clsx(
                    'flex h-[18px] w-[18px] items-center justify-center rounded-l-[2px] border border-r-0 border-[#6c7083]',
                    tab.active ? 'bg-[#eff0f6]' : 'bg-[#b9bccd]'
                )}
            >
                <Icon>{tab.art}</Icon>
            </button>
        ))}
    </div>
);

/* ---------- Bottom bars ---------- */

const StatusBar = () => (
    <footer className="flex h-[15px] items-center border-t border-[#e8e9f0] bg-linear-to-b from-[#d3d5e3] to-[#b3b7c9] pl-[1px] font-['Noto_Sans',sans-serif] text-[#1e2026]">
        <p className="flex-1 truncate">Set the properties for the view or select a location to place it</p>
        <span className="w-[57px]">176.24mm</span>
        <span className="w-[52px]">264.78mm</span>
        <span className="w-[37px]">0mm</span>
        <span className="w-[65px]">Fully Defined</span>
        <span className="w-[63px]">Editing Sheet1</span>
        <span className="w-[22px]">1 : 1</span>
        <span className="flex w-[31px]">
            <Icon size={11}>
                <rect x="4" y="0.5" width="8" height="15" rx="3" fill="#333" stroke="none" />
                <circle cx="8" cy="4.5" r="3.500" fill="#e0322c" stroke="none" />
                <circle cx="8" cy="11.5" r="3.500" fill="#2fb83c" stroke="none" />
            </Icon>
        </span>
        <button className="flex w-[49px] items-center gap-[8px] text-[#9a9db0]">
            MMGS
            <Caret className="rotate-180 text-[#9a9db0]" />
        </button>
        <button aria-label="Quick tips" className="flex w-[47px]">
            <Icon size={11}>
                <rect x="1" y="1" width="14" height="14" fill="#f6fbf6" stroke="#3a5e6a" />
                <path d="M5.5 6c0-4 5.5-3.5 5.5-.5C11 8 8 7.5 8 10M8 11.5v2" stroke="#159a2b" strokeWidth="2.2" />
            </Icon>
        </button>
        <button aria-label="Tags" className="mr-[6px] flex">
            <Icon size={12}>
                <path d="M1 10l7-8 6-1 1 5-8 9z" fill="#f7c136" stroke="#a8761a" />
                <circle cx="12" cy="4" r="1.3" fill="#fff" />
            </Icon>
        </button>
    </footer>
);

const Taskbar = () => (
    <div className="flex h-[28px] items-stretch border-t border-[#39424f] bg-[linear-gradient(90deg,#2c5489_0%,#4874a8_10%,#4470a5_17%,#0d1c40_21%)]">
        <div className="flex min-w-0 flex-1 items-stretch">
            <button aria-label="Start" className="flex w-[40px] items-center justify-center">
                <svg viewBox="0 0 28 28" width="27" height="27" aria-hidden="true">
                    <circle cx="14" cy="14" r="13" fill="#1c4f8c" stroke="#8fc0e6" />
                    <ellipse cx="14" cy="8" rx="10" ry="6" fill="#6aa5d6" opacity="0.6" />
                    <path d="M7 8q3.500-2 7 0l-1 6q-3.500-2-7 0z" fill="#e8622a" />
                    <path d="M15 8.500q3.500 2 7 0l-1.500 6q-3 2-6.500 0z" fill="#8cc63f" />
                    <path d="M5.500 15.500q3.500-2 7 0l-1 6q-3.500-2-7 0z" fill="#3fa0e4" />
                    <path d="M13.500 16q3.500 2 7 0l-1.500 5.500q-3 2-6.500 0z" fill="#f7c832" />
                </svg>
            </button>
            <div className="mx-[4px] my-1 w-[6px] border-x-2 border-dotted border-[#22406a]" />
            <div className="ml-[3px] flex w-[463px] gap-[3px]">
                {taskItems.map((item) => (
                    <button
                        key={item.name}
                        aria-label={item.name}
                        className={clsx('flex flex-1 items-center justify-center rounded-[2px]', taskState[item.state])}
                    >
                        {item.art}
                    </button>
                ))}
            </div>
            <div className="w-[108px] bg-linear-to-r from-[#7595bf] via-[#5a80b0] via-70% to-[#0c1a3e]" />
        </div>
        <div className="flex w-[216px] items-center bg-linear-to-r from-[#0c1a3e] to-[#54749a] to-12% text-white">
            <div className="my-1 ml-[22px] h-5 w-[6px] border-x-2 border-dotted border-[#304e73]" />
            <span className="ml-[6px] w-[24px]">EN</span>
            <button aria-label="Show hidden icons" className="flex w-[14px]">
                <Caret className="rotate-180 text-white" />
            </button>
            <div className="flex flex-1 items-center gap-[6px]">
                <Icon size={12}>
                    <path d="M2 1v14M2 2h8v6H2" fill="#fff" stroke="#fff" />
                    <circle cx="11" cy="11" r="4.5" fill="#dc3a2f" stroke="none" />
                    <path d="M9 9l4 4M13 9l-4 4" stroke="#fff" />
                </Icon>
                <Icon size={12}>
                    <path d="M2 3h8v12H2zM4 1h4" strokeWidth="2" />
                    <path d="M9 5h6v4l-3 2-3-2zM11 2v3M14 2v3M12 11v3" fill="#fff" />
                </Icon>
                <Icon size={13}>
                    <path d="M2 15v-3M5 15v-5M8 15V7M11 15V5M14 15V2" strokeWidth="2" />
                </Icon>
                <Icon size={12}>
                    <path d="M2 6h3l4-4v12l-4-4H2z" fill="#fff" />
                    <path d="M11 5q2 3 0 6M13.5 4q2.5 4 0 8" />
                </Icon>
            </div>
            <div className="w-[48px] text-center font-['Open_Sans',sans-serif] leading-[12px]">
                12:04 SA
                <br />
                23/03/2014
            </div>
            <button aria-label="Show desktop" className="ml-[9px] h-full w-[9px] border-l border-[#2c3f58] bg-linear-to-r from-[#8098b4] to-[#4d6886]" />
        </div>
    </div>
);

export default function App() {
    return (
        <div className="flex h-screen min-h-[480px] flex-col overflow-hidden bg-linear-to-b from-[#37475a] from-20% to-[#626d79] font-['DejaVu_Sans_Condensed','Noto_Sans',sans-serif] text-[8px] leading-[12px]">
            <TitleBar />
            <LayerBar />
            <Ribbon />
            <RibbonTabs />
            <div className="flex min-h-0 flex-1">
                <DocumentWindow />
                <TaskPane />
            </div>
            <StatusBar />
            <Taskbar />
        </div>
    );
}
